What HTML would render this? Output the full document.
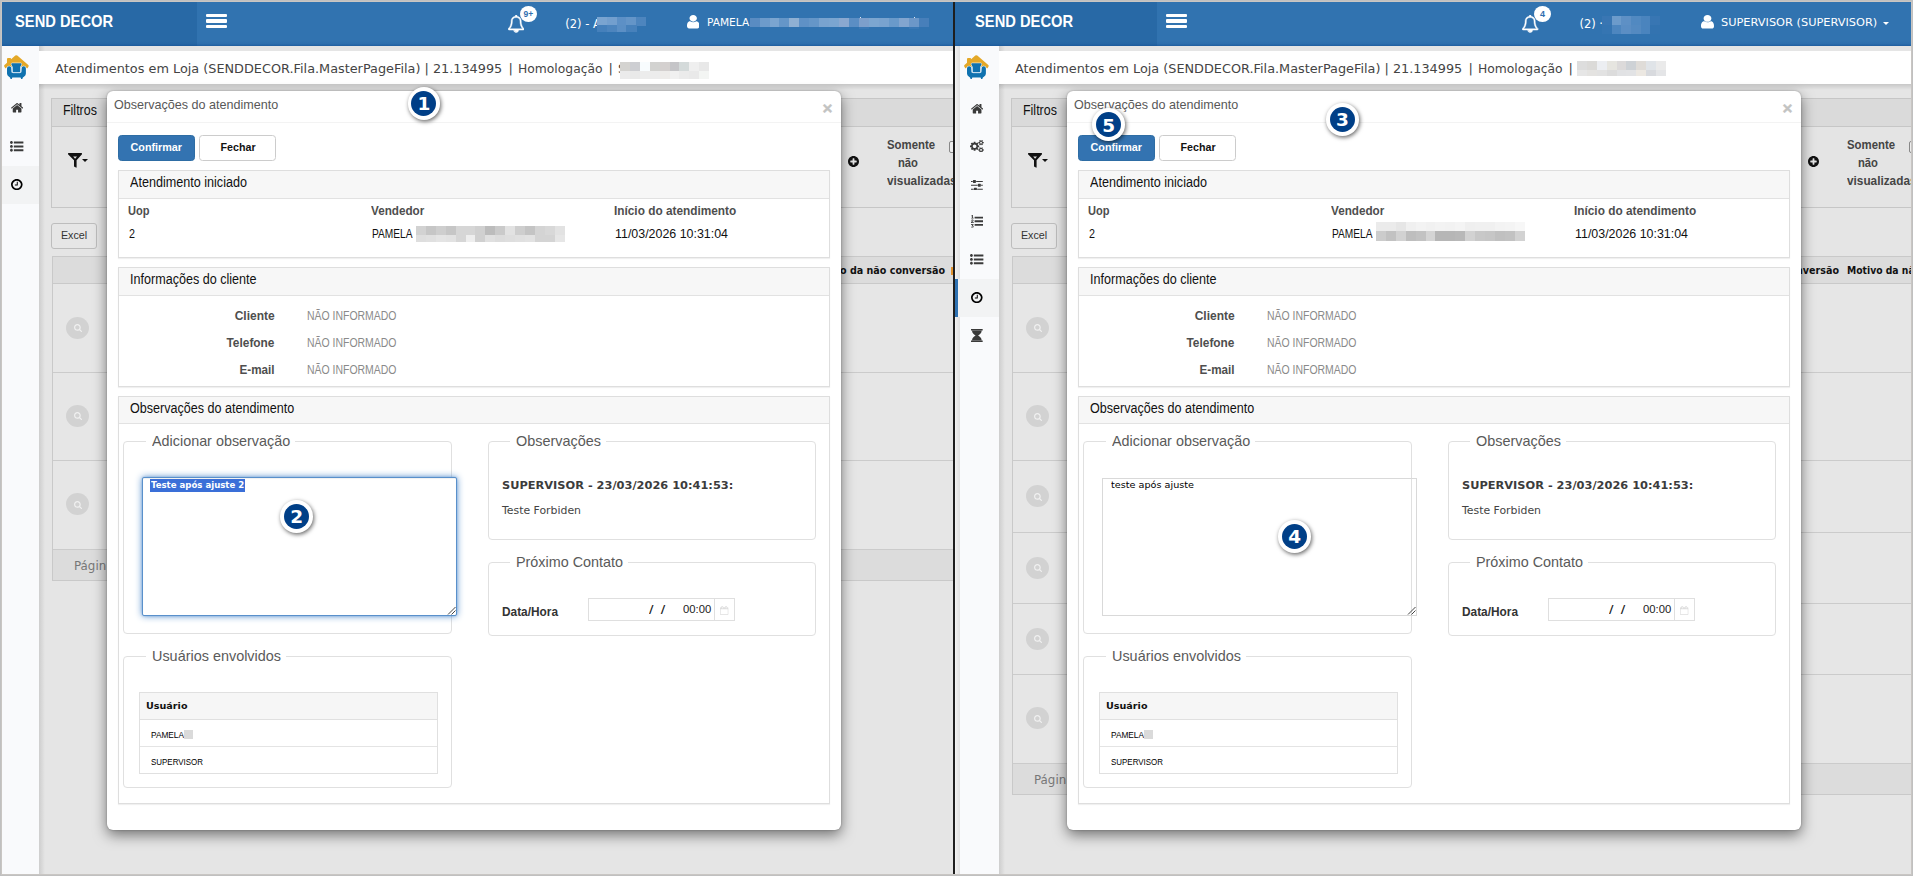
<!DOCTYPE html><html lang="pt-BR"><head><meta charset="utf-8"><title>Observações do atendimento</title><style>

html,body{margin:0;padding:0}
body{width:1913px;height:876px;position:relative;overflow:hidden;background:#e5e5e5;font-family:"Liberation Sans",sans-serif}
.a{position:absolute;display:block}
.t{position:absolute;white-space:nowrap;display:block}
.pane{position:absolute;top:0;height:876px;overflow:hidden}
.org{position:absolute;top:0;height:876px;width:0}
.b{display:inline-block;width:0;height:0}

</style></head><body>
<div class="pane" style="left:0;width:953px"><div class="org" style="left:0"><div class="a" style="left:-10px;top:0px;width:980px;height:876px;background:#e5e5e5"></div><div class="a" style="left:51px;top:98px;width:919px;height:110px;background:#e4e4e4;border:1px solid #c6c6c6;box-sizing:border-box"></div><div class="a" style="left:52px;top:99px;width:918px;height:27px;background:#dadada;border-bottom:1px solid #c6c6c6"></div><span class="t" style="left:62.80px;top:101.90px;font:400 14px/1.2 'Liberation Sans', sans-serif;color:#111;transform:scaleX(0.8892);transform-origin:left center;">Filtros</span><svg class="a" style="left:67.9px;top:153px" width="14" height="14.8" viewBox="0 0 14 14.8"><path fill="#111" d="M0 0.4 Q0 0 0.4 0 L13.6 0 Q14 0 14 0.4 L14 1.3 L8.6 7.3 L8.6 14.3 Q8.6 14.9 8 14.6 L6.3 13.7 Q6 13.5 6 13.1 L6 7.3 L0 1.3 Z"/><path fill="#e0e0e0" d="M5.2 3.4 L9 3.4 L7.1 5.7 Z"/></svg><div class="a" style="left:81.6px;top:158.7px;width:7.400000000000006px;height:3.3000000000000114px;width:0;height:0;border-left:3.5px solid transparent;border-right:3.5px solid transparent;border-top:3.5px solid #111"></div><svg class="a" style="left:848.20px;top:156.00px;" width="11.00" height="11.00" viewBox="0 -1408 1536 1536" preserveAspectRatio="none"><path transform="scale(1,-1)" fill="#111" d="M1216 576C1216 541 1187 512 1152 512H896V256C896 221 867 192 832 192H704C669 192 640 221 640 256V512H384C349 512 320 541 320 576V704C320 739 349 768 384 768H640V1024C640 1059 669 1088 704 1088H832C867 1088 896 1059 896 1024V768H1152C1187 768 1216 739 1216 704V576ZM1536 640C1536 1064 1192 1408 768 1408C344 1408 0 1064 0 640C0 216 344 -128 768 -128C1192 -128 1536 216 1536 640Z"/></svg><span class="t" style="left:886.50px;top:138.30px;font:700 12.5px/1.2 'Liberation Sans', sans-serif;color:#454545;transform:scaleX(0.9091);transform-origin:left center;">Somente</span><span class="t" style="left:897.60px;top:155.90px;font:700 12.5px/1.2 'Liberation Sans', sans-serif;color:#454545;transform:scaleX(0.8995);transform-origin:left center;">não</span><span class="t" style="left:886.50px;top:173.50px;font:700 12.5px/1.2 'Liberation Sans', sans-serif;color:#454545;transform:scaleX(0.9436);transform-origin:left center;">visualizadas</span><div class="a" style="left:949px;top:141px;width:12px;height:12px;border:1px solid #888;border-radius:2px;background:#eee;box-sizing:border-box"></div><div class="a" style="left:51px;top:223.4px;width:45.599999999999994px;height:25.19999999999999px;border:1px solid #bdbdbd;border-radius:3px;background:#e6e6e6;box-sizing:border-box"></div><span class="t" style="left:59.94px;top:229.30px;font:400 11.5px/1.2 'Liberation Sans', sans-serif;color:#333;transform:scaleX(0.9316);transform-origin:center center;">Excel</span><div class="a" style="left:52px;top:256px;width:918px;height:325px;background:#e6e6e6;border:1px solid #c9c9c9;box-sizing:border-box"></div><div class="a" style="left:53px;top:257px;width:917px;height:26px;background:#dcdcdc;border-bottom:1px solid #c9c9c9"></div><div class="a" style="left:53px;top:549.4px;width:917px;height:30.600000000000023px;background:#dcdcdc"></div><div class="a" style="left:53px;top:372px;width:917px;height:1px;background:#cbcbcb"></div><div class="a" style="left:53px;top:460px;width:917px;height:1px;background:#cbcbcb"></div><div class="a" style="left:53px;top:549px;width:917px;height:1px;background:#cbcbcb"></div><div class="a" style="left:65.8px;top:316.5px;width:23px;height:22px;border-radius:50%;background:#d2d2d2"></div><svg class="a" style="left:73.50px;top:323.80px;" width="8.00" height="8.00" viewBox="0 -1408 1664 1664" preserveAspectRatio="none"><path transform="scale(1,-1)" fill="#f0f0f0" d="M1152 704C1152 457 951 256 704 256C457 256 256 457 256 704C256 951 457 1152 704 1152C951 1152 1152 951 1152 704ZM1664 -128C1664 -94 1650 -61 1627 -38L1284 305C1365 422 1408 562 1408 704C1408 1093 1093 1408 704 1408C315 1408 0 1093 0 704C0 315 315 0 704 0C846 0 986 43 1103 124L1446 -218C1469 -242 1502 -256 1536 -256C1606 -256 1664 -198 1664 -128Z"/></svg><div class="a" style="left:65.8px;top:405px;width:23px;height:22px;border-radius:50%;background:#d2d2d2"></div><svg class="a" style="left:73.50px;top:412.30px;" width="8.00" height="8.00" viewBox="0 -1408 1664 1664" preserveAspectRatio="none"><path transform="scale(1,-1)" fill="#f0f0f0" d="M1152 704C1152 457 951 256 704 256C457 256 256 457 256 704C256 951 457 1152 704 1152C951 1152 1152 951 1152 704ZM1664 -128C1664 -94 1650 -61 1627 -38L1284 305C1365 422 1408 562 1408 704C1408 1093 1093 1408 704 1408C315 1408 0 1093 0 704C0 315 315 0 704 0C846 0 986 43 1103 124L1446 -218C1469 -242 1502 -256 1536 -256C1606 -256 1664 -198 1664 -128Z"/></svg><div class="a" style="left:65.8px;top:493.3px;width:23px;height:22px;border-radius:50%;background:#d2d2d2"></div><svg class="a" style="left:73.50px;top:500.60px;" width="8.00" height="8.00" viewBox="0 -1408 1664 1664" preserveAspectRatio="none"><path transform="scale(1,-1)" fill="#f0f0f0" d="M1152 704C1152 457 951 256 704 256C457 256 256 457 256 704C256 951 457 1152 704 1152C951 1152 1152 951 1152 704ZM1664 -128C1664 -94 1650 -61 1627 -38L1284 305C1365 422 1408 562 1408 704C1408 1093 1093 1408 704 1408C315 1408 0 1093 0 704C0 315 315 0 704 0C846 0 986 43 1103 124L1446 -218C1469 -242 1502 -256 1536 -256C1606 -256 1664 -198 1664 -128Z"/></svg><span class="t" style="left:74.00px;top:557.50px;font:400 13px/1.2 'DejaVu Sans', 'Liberation Sans', sans-serif;color:#777;transform:scaleX(0.9115);transform-origin:left center;">Págin</span><span class="t" style="left:840.00px;top:263.90px;font:700 10.5px/1.2 'DejaVu Sans', 'Liberation Sans', sans-serif;color:#111;transform:scaleX(0.9117);transform-origin:left center;">o da não conversão</span><div class="a" style="left:951px;top:267px;width:2.5px;height:7.5px;background:#e0922e"></div><div class="a" style="left:39px;top:46px;width:6px;height:830px;background:linear-gradient(90deg,rgba(0,0,0,.10),rgba(0,0,0,0))"></div><div class="a" style="left:39px;top:84px;width:931px;height:6px;background:linear-gradient(180deg,rgba(0,0,0,.13),rgba(0,0,0,0))"></div><div class="a" style="left:39px;top:51px;width:931px;height:33px;background:#fff"></div><span class="t" style="left:55.40px;top:61.00px;font:400 13px/1.2 'DejaVu Sans', 'Liberation Sans', sans-serif;color:#444;transform:scaleX(0.9870);transform-origin:left center;">Atendimentos em Loja (SENDDECOR.Fila.MasterPageFila) | 21.134995</span><span class="t" style="left:508.60px;top:61.00px;font:400 13px/1.2 'DejaVu Sans', 'Liberation Sans', sans-serif;color:#444;">|</span><span class="t" style="left:518.20px;top:61.00px;font:400 13px/1.2 'DejaVu Sans', 'Liberation Sans', sans-serif;color:#444;transform:scaleX(0.9484);transform-origin:left center;">Homologação</span><span class="t" style="left:608.60px;top:61.00px;font:400 13px/1.2 'DejaVu Sans', 'Liberation Sans', sans-serif;color:#444;">|</span><span class="t" style="left:617.90px;top:61.00px;font:400 13px/1.2 'DejaVu Sans', 'Liberation Sans', sans-serif;color:#444;">S</span><div class="a" style="left:620.2px;top:61.9px;width:88.79999999999995px;height:17.000000000000007px;overflow:hidden"><i class="a" style="left:0.00px;top:0.00px;width:10.37px;height:9.50px;background:#d4d3d0"></i><i class="a" style="left:9.87px;top:0.00px;width:10.37px;height:9.50px;background:#cdced2"></i><i class="a" style="left:19.73px;top:0.00px;width:10.37px;height:9.50px;background:#f8fcfe"></i><i class="a" style="left:29.60px;top:0.00px;width:10.37px;height:9.50px;background:#d2d2d0"></i><i class="a" style="left:39.47px;top:0.00px;width:10.37px;height:9.50px;background:#d4d0cf"></i><i class="a" style="left:49.33px;top:0.00px;width:10.37px;height:9.50px;background:#c5c5c8"></i><i class="a" style="left:59.20px;top:0.00px;width:10.37px;height:9.50px;background:#d4dada"></i><i class="a" style="left:69.07px;top:0.00px;width:10.37px;height:9.50px;background:#efefef"></i><i class="a" style="left:78.93px;top:0.00px;width:10.37px;height:9.50px;background:#e8e8e8"></i><i class="a" style="left:0.00px;top:9.00px;width:10.37px;height:8.50px;background:#ebebeb"></i><i class="a" style="left:9.87px;top:9.00px;width:10.37px;height:8.50px;background:#e9e9e9"></i><i class="a" style="left:19.73px;top:9.00px;width:10.37px;height:8.50px;background:#ececec"></i><i class="a" style="left:29.60px;top:9.00px;width:10.37px;height:8.50px;background:#ececec"></i><i class="a" style="left:39.47px;top:9.00px;width:10.37px;height:8.50px;background:#eeecea"></i><i class="a" style="left:49.33px;top:9.00px;width:10.37px;height:8.50px;background:#f0f0f0"></i><i class="a" style="left:59.20px;top:9.00px;width:10.37px;height:8.50px;background:#ebebeb"></i><i class="a" style="left:69.07px;top:9.00px;width:10.37px;height:8.50px;background:#e9e9e9"></i><i class="a" style="left:78.93px;top:9.00px;width:10.37px;height:8.50px;background:#f3f5f3"></i></div><div class="a" style="left:-5px;top:46px;width:44px;height:830px;background:#f9fafc"></div><div class="a" style="left:-5px;top:46px;width:5px;height:830px;background:linear-gradient(90deg,#f6f6f6,#ececec 30%,#e0e0e0)"></div><div class="a" style="left:-5px;top:166.0px;width:44px;height:37.5px;background:#f2f3f4"></div><div class="a" style="left:-5.5px;top:166.0px;width:3.5px;height:37.5px;background:#2f72b2"></div><svg class="a" style="left:4.1px;top:54.8px" width="24.8" height="24.4" viewBox="0 0 24.8 24.4"><path fill="#e4a828" d="M11.3 0.6 Q12.3 -0.3 13.3 0.6 L24.3 10.1 Q25 10.8 24.5 11.6 L23.7 12.9 Q23.2 13.5 22.6 12.9 L21.4 11.7 L3.4 11.7 L2.2 12.9 Q1.6 13.5 1.1 12.9 L0.3 11.6 Q-0.2 10.8 0.5 10.1 L3 7.8 L3 4 Q3 3 4 3 L6.2 3 Q7.1 3 7.1 3.9 L7.1 4.3 Z"/><path fill="#0f72b0" stroke="#fff" stroke-width="1" paint-order="stroke" d="M7.2 9.1 Q7.2 8.2 8.2 8.2 L16.7 8.2 Q17.7 8.2 17.7 9.1 L16.3 12 L16.1 17 L8.8 17 L8.6 12 Z"/><path fill="#0f72b0" stroke="#fff" stroke-width="1" paint-order="stroke" d="M3 13.4 Q3 11.2 5.1 11.2 Q7.3 11.2 7.3 13.4 L7.6 17.2 Q7.7 18 8.6 18 L16.3 18 Q17.2 18 17.3 17.2 L17.6 13.4 Q17.6 11.2 19.8 11.2 Q21.9 11.2 21.9 13.4 L21.9 18.5 Q21.9 20.6 20.2 21.6 L18.9 22.5 L18.2 24.3 L17.2 24.3 L16.6 22.5 L8.3 22.5 L7.7 24.3 L6.7 24.3 L6 22.5 L4.7 21.6 Q3 20.6 3 18.5 Z"/><path fill="none" stroke="#a9cde6" stroke-width="0.9" d="M7.8 11.6 L8.1 16.7 Q8.2 17.7 9.2 17.7 L15.7 17.7 Q16.7 17.7 16.8 16.7 L17.1 11.6"/></svg><svg class="a" style="left:11.00px;top:103.40px;" width="12.20" height="9.60" viewBox="25.859859505812633 -1283.25 1612.2802809883747 1283.25" preserveAspectRatio="none"><path transform="scale(1,-1)" fill="#3a3a3a" d="M1408 544C1408 546 1408 548 1407 550L832 1024L257 550C257 548 256 546 256 544V64C256 29 285 0 320 0H704V384H960V0H1344C1379 0 1408 29 1408 64ZM1631 613C1642 626 1640 647 1627 658L1408 840V1248C1408 1266 1394 1280 1376 1280H1184C1166 1280 1152 1266 1152 1248V1053L908 1257C866 1292 798 1292 756 1257L37 658C24 647 22 626 33 613L95 539C100 533 108 529 116 528C125 527 133 530 140 535L832 1112L1524 535C1530 530 1537 528 1545 528C1546 528 1547 528 1548 528C1556 529 1564 533 1569 539L1631 613Z"/></svg><svg class="a" style="left:10.40px;top:140.80px;" width="13.40" height="10.80" viewBox="0 -1344 1792 1408" preserveAspectRatio="none"><path transform="scale(1,-1)" fill="#3a3a3a" d="M384 128C384 234 298 320 192 320C86 320 0 234 0 128C0 22 86 -64 192 -64C298 -64 384 22 384 128ZM384 640C384 746 298 832 192 832C86 832 0 746 0 640C0 534 86 448 192 448C298 448 384 534 384 640ZM1792 224C1792 241 1777 256 1760 256H544C527 256 512 241 512 224V32C512 15 527 0 544 0H1760C1777 0 1792 15 1792 32ZM384 1152C384 1258 298 1344 192 1344C86 1344 0 1258 0 1152C0 1046 86 960 192 960C298 960 384 1046 384 1152ZM1792 736C1792 753 1777 768 1760 768H544C527 768 512 753 512 736V544C512 527 527 512 544 512H1760C1777 512 1792 527 1792 544ZM1792 1248C1792 1265 1777 1280 1760 1280H544C527 1280 512 1265 512 1248V1056C512 1039 527 1024 544 1024H1760C1777 1024 1792 1039 1792 1056Z"/></svg><svg class="a" style="left:11.30px;top:178.70px;" width="11.60" height="11.20" viewBox="0 -1408 1536 1536" preserveAspectRatio="none"><path transform="scale(1,-1)" fill="#000" d="M896 992C896 1010 882 1024 864 1024H800C782 1024 768 1010 768 992V640H544C526 640 512 626 512 608V544C512 526 526 512 544 512H864C882 512 896 526 896 544ZM1312 640C1312 340 1068 96 768 96C468 96 224 340 224 640C224 940 468 1184 768 1184C1068 1184 1312 940 1312 640ZM1536 640C1536 1064 1192 1408 768 1408C344 1408 0 1064 0 640C0 216 344 -128 768 -128C1192 -128 1536 216 1536 640Z"/></svg><div class="a" style="left:-10px;top:0px;width:207px;height:46px;background:#2869a6"></div><div class="a" style="left:197px;top:0px;width:773px;height:46px;background:#3173b0"></div><div class="a" style="left:-10px;top:41px;width:980px;height:5px;background:linear-gradient(180deg,rgba(20,80,150,0),rgba(20,80,150,.12) 55%,rgba(20,80,150,.6))"></div><span class="t" style="left:15.40px;top:12.00px;font:700 16.5px/1.2 'Liberation Sans', sans-serif;color:#fff;transform:scaleX(0.8917);transform-origin:left center;">SEND DECOR</span><div class="a" style="left:205.6px;top:14.2px;width:21.80000000000001px;height:3.1999999999999993px;background:#fff;border-radius:1px"></div><div class="a" style="left:205.6px;top:19.4px;width:21.80000000000001px;height:3.1999999999999993px;background:#fff;border-radius:1px"></div><div class="a" style="left:205.6px;top:24.6px;width:21.80000000000001px;height:3.1999999999999957px;background:#fff;border-radius:1px"></div><svg class="a" style="left:508.03px;top:15.20px;" width="16.34" height="17.60" viewBox="64 -1536 1664 1792" preserveAspectRatio="none"><path transform="scale(1,-1)" fill="#fff" stroke="#fff" stroke-width="45" d="M912 -160C912 -169 905 -176 896 -176C799 -176 720 -97 720 0C720 9 727 16 736 16C745 16 752 9 752 0C752 -79 817 -144 896 -144C905 -144 912 -151 912 -160ZM246 128C425 330 512 604 512 960C512 1089 634 1280 896 1280C1158 1280 1280 1089 1280 960C1280 604 1367 330 1546 128ZM1728 128C1580 253 1408 477 1408 960C1408 1152 1249 1362 984 1401C989 1413 992 1426 992 1440C992 1493 949 1536 896 1536C843 1536 800 1493 800 1440C800 1426 803 1413 808 1401C543 1362 384 1152 384 960C384 477 212 253 64 128C64 58 122 0 192 0H640C640 -141 755 -256 896 -256C1037 -256 1152 -141 1152 0H1600C1670 0 1728 58 1728 128Z"/></svg><div class="a" style="left:520px;top:5.9px;width:16.9px;height:16px;border-radius:50%;background:#fff"></div><span class="t" style="left:523.55px;top:8.60px;font:700 8.5px/1.2 'Liberation Sans', sans-serif;color:#2f6fb0;">9+</span><span class="t" style="left:565.30px;top:17.60px;font:400 11.5px/1.2 'DejaVu Sans', 'Liberation Sans', sans-serif;color:#fff;">(2) - A</span><div class="a" style="left:596.9px;top:17px;width:49.10000000000002px;height:14.899999999999999px;overflow:hidden"><i class="a" style="left:0.00px;top:0.00px;width:10.32px;height:8.70px;background:#7aa4d0"></i><i class="a" style="left:9.82px;top:0.00px;width:10.32px;height:8.70px;background:#739fce"></i><i class="a" style="left:19.64px;top:0.00px;width:10.32px;height:8.70px;background:#5d90c6"></i><i class="a" style="left:29.46px;top:0.00px;width:10.32px;height:8.70px;background:#6495c8"></i><i class="a" style="left:39.28px;top:0.00px;width:10.32px;height:8.70px;background:#4d85be"></i><i class="a" style="left:0.00px;top:8.20px;width:10.32px;height:7.20px;background:#4580bb"></i><i class="a" style="left:9.82px;top:8.20px;width:10.32px;height:7.20px;background:#4d85be"></i><i class="a" style="left:19.64px;top:8.20px;width:10.32px;height:7.20px;background:#5b8fc5"></i><i class="a" style="left:29.46px;top:8.20px;width:10.32px;height:7.20px;background:#4781bb"></i></div><svg class="a" style="left:686.80px;top:15.20px;" width="12.40" height="13.40" viewBox="0 -1408 1280 1536" preserveAspectRatio="none"><path transform="scale(1,-1)" fill="#fff" d="M1280 137C1280 400 1215 704 953 704C872 625 762 576 640 576C518 576 408 625 327 704C65 704 0 400 0 137C0 -9 96 -128 213 -128H1067C1184 -128 1280 -9 1280 137ZM1024 1024C1024 1236 852 1408 640 1408C428 1408 256 1236 256 1024C256 812 428 640 640 640C852 640 1024 812 1024 1024Z"/></svg><span class="t" style="left:706.80px;top:15.80px;font:400 10.5px/1.2 'DejaVu Sans', 'Liberation Sans', sans-serif;color:#fff;transform:scaleX(1.0093);transform-origin:left center;">PAMELA</span><div class="a" style="left:749.6px;top:18px;width:179.39999999999998px;height:9px;overflow:hidden"><i class="a" style="left:0.00px;top:0.00px;width:10.47px;height:9.50px;background:#5a8cc2"></i><i class="a" style="left:9.97px;top:0.00px;width:10.47px;height:9.50px;background:#6d9bcb"></i><i class="a" style="left:19.93px;top:0.00px;width:10.47px;height:9.50px;background:#7ba5d0"></i><i class="a" style="left:29.90px;top:0.00px;width:10.47px;height:9.50px;background:#6596c8"></i><i class="a" style="left:39.87px;top:0.00px;width:10.47px;height:9.50px;background:#8fb0d3"></i><i class="a" style="left:49.83px;top:0.00px;width:10.47px;height:9.50px;background:#5f91c6"></i><i class="a" style="left:59.80px;top:0.00px;width:10.47px;height:9.50px;background:#6596c8"></i><i class="a" style="left:69.77px;top:0.00px;width:10.47px;height:9.50px;background:#79a3cf"></i><i class="a" style="left:79.73px;top:0.00px;width:10.47px;height:9.50px;background:#7ba5d0"></i><i class="a" style="left:89.70px;top:0.00px;width:10.47px;height:9.50px;background:#8aa8d0"></i><i class="a" style="left:99.67px;top:0.00px;width:10.47px;height:9.50px;background:#5b8ec4"></i><i class="a" style="left:109.63px;top:0.00px;width:10.47px;height:9.50px;background:#7d9fcb"></i><i class="a" style="left:119.60px;top:0.00px;width:10.47px;height:9.50px;background:#7ca6d0"></i><i class="a" style="left:129.57px;top:0.00px;width:10.47px;height:9.50px;background:#79a3cf"></i><i class="a" style="left:139.53px;top:0.00px;width:10.47px;height:9.50px;background:#6a9aca"></i><i class="a" style="left:149.50px;top:0.00px;width:10.47px;height:9.50px;background:#82a5cf"></i><i class="a" style="left:159.47px;top:0.00px;width:10.47px;height:9.50px;background:#6c97c8"></i><i class="a" style="left:169.43px;top:0.00px;width:10.47px;height:9.50px;background:#477fba"></i></div><div class="a" style="left:859px;top:27px;width:10px;height:2px;background:#3a78b5"></div><div class="a" style="left:909px;top:27px;width:10px;height:2px;background:#3a78b5"></div><div class="a" style="left:859.5px;top:16.6px;width:1.5px;height:1.3999999999999986px;background:#dfe8f3"></div><div class="a" style="left:913.5px;top:16.6px;width:1.5px;height:1.3999999999999986px;background:#dfe8f3"></div><div class="a" style="left:107px;top:90.6px;width:734.4px;height:739.0px;background:#fff;border-radius:6px;box-shadow:0 5px 14px rgba(0,0,0,.5), 0 0 2px rgba(0,0,0,.3)"></div><div class="a" style="left:107px;top:121.5px;width:734px;height:1.0px;background:#f3f3f3"></div><span class="t" style="left:113.80px;top:96.60px;font:400 13px/1.2 'Liberation Sans', sans-serif;color:#585858;transform:scaleX(0.9669);transform-origin:left center;">Observações do atendimento</span><span class="t" style="left:822.53px;top:99.30px;font:700 17px/1.2 'Liberation Sans', sans-serif;color:#c2c2c2;-webkit-text-stroke:.5px #c6c6c6;">×</span><div class="a" style="left:118.2px;top:135.2px;width:76.99999999999999px;height:25.80000000000001px;background:#3373b1;border-radius:3.5px;border:1px solid #2e6da4;box-sizing:border-box"></div><span class="t" style="left:130.32px;top:140.90px;font:700 11px/1.2 'Liberation Sans', sans-serif;color:#fff;transform:scaleX(0.9798);transform-origin:center center;">Confirmar</span><div class="a" style="left:199.4px;top:135.2px;width:76.6px;height:25.80000000000001px;background:#fff;border-radius:3.5px;border:1px solid #ccc;box-sizing:border-box"></div><span class="t" style="left:219.96px;top:140.90px;font:700 11px/1.2 'Liberation Sans', sans-serif;color:#111;transform:scaleX(0.9701);transform-origin:center center;">Fechar</span><div class="a" style="left:118px;top:170px;width:712px;height:87.60000000000002px;border:1px solid #dedede;box-sizing:border-box;background:#fff;box-shadow:0 1px 1px rgba(0,0,0,.06)"></div><div class="a" style="left:119px;top:171px;width:710px;height:27.80000000000001px;background:#f7f7f7;border-bottom:1px solid #e2e2e2;box-sizing:border-box"></div><span class="t" style="left:129.80px;top:174.20px;font:400 14px/1.2 'Liberation Sans', sans-serif;color:#111;transform:scaleX(0.9001);transform-origin:left center;">Atendimento iniciado</span><div class="a" style="left:118px;top:267.3px;width:712px;height:119.89999999999998px;border:1px solid #dedede;box-sizing:border-box;background:#fff;box-shadow:0 1px 1px rgba(0,0,0,.06)"></div><div class="a" style="left:119px;top:268.3px;width:710px;height:27.5px;background:#f7f7f7;border-bottom:1px solid #e2e2e2;box-sizing:border-box"></div><span class="t" style="left:129.80px;top:271.20px;font:400 14px/1.2 'Liberation Sans', sans-serif;color:#111;transform:scaleX(0.8981);transform-origin:left center;">Informações do cliente</span><div class="a" style="left:118px;top:396px;width:712px;height:407.70000000000005px;border:1px solid #dedede;box-sizing:border-box;background:#fff;box-shadow:0 1px 1px rgba(0,0,0,.06)"></div><div class="a" style="left:119px;top:397px;width:710px;height:27.399999999999977px;background:#f7f7f7;border-bottom:1px solid #e2e2e2;box-sizing:border-box"></div><span class="t" style="left:129.80px;top:399.80px;font:400 14px/1.2 'Liberation Sans', sans-serif;color:#111;transform:scaleX(0.8984);transform-origin:left center;">Observações do atendimento</span><span class="t" style="left:128.30px;top:204.30px;font:700 12px/1.2 'Liberation Sans', sans-serif;color:#4e4e4e;transform:scaleX(0.9216);transform-origin:left center;">Uop</span><span class="t" style="left:371.20px;top:204.30px;font:700 12px/1.2 'Liberation Sans', sans-serif;color:#4e4e4e;transform:scaleX(0.9746);transform-origin:left center;">Vendedor</span><span class="t" style="left:614.20px;top:204.30px;font:700 12px/1.2 'Liberation Sans', sans-serif;color:#4e4e4e;transform:scaleX(0.9854);transform-origin:left center;">Início do atendimento</span><span class="t" style="left:129.00px;top:227.10px;font:400 12.5px/1.2 'Liberation Sans', sans-serif;color:#111;transform:scaleX(0.8629);transform-origin:left center;">2</span><span class="t" style="left:371.90px;top:227.10px;font:400 12.5px/1.2 'Liberation Sans', sans-serif;color:#111;transform:scaleX(0.8133);transform-origin:left center;">PAMELA</span><span class="t" style="left:614.70px;top:227.10px;font:400 12.5px/1.2 'Liberation Sans', sans-serif;color:#111;transform:scaleX(0.9933);transform-origin:left center;">11/03/2026 10:31:04</span><div class="a" style="left:415.8px;top:225.9px;width:149.2px;height:15.900000000000006px;overflow:hidden"><i class="a" style="left:0.00px;top:0.00px;width:10.45px;height:9.60px;background:#d2d2d2"></i><i class="a" style="left:9.95px;top:0.00px;width:10.45px;height:9.60px;background:#c6c6c6"></i><i class="a" style="left:19.89px;top:0.00px;width:10.45px;height:9.60px;background:#cecece"></i><i class="a" style="left:29.84px;top:0.00px;width:10.45px;height:9.60px;background:#c6c6c6"></i><i class="a" style="left:39.79px;top:0.00px;width:10.45px;height:9.60px;background:#d6d6d6"></i><i class="a" style="left:49.73px;top:0.00px;width:10.45px;height:9.60px;background:#d6d6d6"></i><i class="a" style="left:59.68px;top:0.00px;width:10.45px;height:9.60px;background:#d0d0d0"></i><i class="a" style="left:69.63px;top:0.00px;width:10.45px;height:9.60px;background:#bcbcbc"></i><i class="a" style="left:79.57px;top:0.00px;width:10.45px;height:9.60px;background:#cacaca"></i><i class="a" style="left:89.52px;top:0.00px;width:10.45px;height:9.60px;background:#e2e2e2"></i><i class="a" style="left:99.47px;top:0.00px;width:10.45px;height:9.60px;background:#cecece"></i><i class="a" style="left:109.41px;top:0.00px;width:10.45px;height:9.60px;background:#c4c4c4"></i><i class="a" style="left:119.36px;top:0.00px;width:10.45px;height:9.60px;background:#d4d4d4"></i><i class="a" style="left:129.31px;top:0.00px;width:10.45px;height:9.60px;background:#d8d8d8"></i><i class="a" style="left:139.25px;top:0.00px;width:10.45px;height:9.60px;background:#e2e2e2"></i><i class="a" style="left:0.00px;top:9.10px;width:10.45px;height:7.30px;background:#dedede"></i><i class="a" style="left:9.95px;top:9.10px;width:10.45px;height:7.30px;background:#e0e0e0"></i><i class="a" style="left:19.89px;top:9.10px;width:10.45px;height:7.30px;background:#e4e4e4"></i><i class="a" style="left:29.84px;top:9.10px;width:10.45px;height:7.30px;background:#e2e2e2"></i><i class="a" style="left:39.79px;top:9.10px;width:10.45px;height:7.30px;background:#d6d6d6"></i><i class="a" style="left:49.73px;top:9.10px;width:10.45px;height:7.30px;background:#eeeeee"></i><i class="a" style="left:59.68px;top:9.10px;width:10.45px;height:7.30px;background:#d0d0d0"></i><i class="a" style="left:69.63px;top:9.10px;width:10.45px;height:7.30px;background:#e0e0e0"></i><i class="a" style="left:79.57px;top:9.10px;width:10.45px;height:7.30px;background:#dcdcdc"></i><i class="a" style="left:89.52px;top:9.10px;width:10.45px;height:7.30px;background:#dedede"></i><i class="a" style="left:99.47px;top:9.10px;width:10.45px;height:7.30px;background:#e0e0e0"></i><i class="a" style="left:109.41px;top:9.10px;width:10.45px;height:7.30px;background:#e2e2e2"></i><i class="a" style="left:119.36px;top:9.10px;width:10.45px;height:7.30px;background:#d4d4d4"></i><i class="a" style="left:129.31px;top:9.10px;width:10.45px;height:7.30px;background:#d4d4d4"></i><i class="a" style="left:139.25px;top:9.10px;width:10.45px;height:7.30px;background:#e6e6e6"></i></div><span class="t" style="left:232.51px;top:309.30px;font:700 12.5px/1.2 'Liberation Sans', sans-serif;color:#4e4e4e;transform:scaleX(0.9595);transform-origin:right center;">Cliente</span><span class="t" style="left:306.80px;top:309.30px;font:400 12px/1.2 'Liberation Sans', sans-serif;color:#8a8a8a;transform:scaleX(0.8717);transform-origin:left center;">NÃO INFORMADO</span><span class="t" style="left:223.72px;top:336.30px;font:700 12.5px/1.2 'Liberation Sans', sans-serif;color:#4e4e4e;transform:scaleX(0.9508);transform-origin:right center;">Telefone</span><span class="t" style="left:306.80px;top:336.30px;font:400 12px/1.2 'Liberation Sans', sans-serif;color:#8a8a8a;transform:scaleX(0.8717);transform-origin:left center;">NÃO INFORMADO</span><span class="t" style="left:236.68px;top:363.30px;font:700 12.5px/1.2 'Liberation Sans', sans-serif;color:#4e4e4e;transform:scaleX(0.9329);transform-origin:right center;">E-mail</span><span class="t" style="left:306.80px;top:363.30px;font:400 12px/1.2 'Liberation Sans', sans-serif;color:#8a8a8a;transform:scaleX(0.8717);transform-origin:left center;">NÃO INFORMADO</span><div class="a" style="left:123.4px;top:441px;width:328.6px;height:193px;border:1px solid #e0e0e0;border-radius:4px;box-sizing:border-box"></div><div class="a" style="left:145.5px;top:439px;width:149.2px;height:5px;background:#fff"></div><span class="t" style="left:151.50px;top:431.60px;font:400 15px/1.2 'Liberation Sans', sans-serif;color:#5a5a5a;transform:scaleX(0.9580);transform-origin:left center;">Adicionar observação</span><div class="a" style="left:488.3px;top:441px;width:327.99999999999994px;height:99px;border:1px solid #e0e0e0;border-radius:4px;box-sizing:border-box"></div><div class="a" style="left:509.70000000000005px;top:439px;width:96.0px;height:5px;background:#fff"></div><span class="t" style="left:515.70px;top:431.60px;font:400 15px/1.2 'Liberation Sans', sans-serif;color:#5a5a5a;transform:scaleX(0.9618);transform-origin:left center;">Observações</span><div class="a" style="left:488.3px;top:562px;width:327.99999999999994px;height:73.79999999999995px;border:1px solid #e0e0e0;border-radius:4px;box-sizing:border-box"></div><div class="a" style="left:509.70000000000005px;top:560px;width:118.0px;height:5px;background:#fff"></div><span class="t" style="left:515.70px;top:552.80px;font:400 15px/1.2 'Liberation Sans', sans-serif;color:#5a5a5a;transform:scaleX(0.9578);transform-origin:left center;">Próximo Contato</span><div class="a" style="left:123.4px;top:656px;width:328.6px;height:132px;border:1px solid #e0e0e0;border-radius:4px;box-sizing:border-box"></div><div class="a" style="left:145.5px;top:654px;width:140.0px;height:5px;background:#fff"></div><span class="t" style="left:151.50px;top:646.60px;font:400 15px/1.2 'Liberation Sans', sans-serif;color:#5a5a5a;transform:scaleX(0.9610);transform-origin:left center;">Usuários envolvidos</span><div class="a" style="left:142.2px;top:477.4px;width:314.8px;height:138.80000000000007px;background:#fff;border:1.6px solid #5990cb;border-radius:2px;box-sizing:border-box;box-shadow:0 0 7px rgba(80,140,205,.95), 0 0 2px rgba(80,140,205,.5), inset 0 1px 1px rgba(0,0,0,.06)"></div><div class="a" style="left:150px;top:478.8px;width:94.6px;height:13.199999999999989px;background:#3a6fd8"></div><span class="t" style="left:150.60px;top:478.70px;font:700 9.5px/1.2 'DejaVu Sans', 'Liberation Sans', sans-serif;color:#fff;transform:scaleX(0.9023);transform-origin:left center;">Teste após ajuste 2</span><svg class="a" style="left:447px;top:606px" width="9" height="9" viewBox="0 0 9 9"><path d="M1 8.5L8.5 1M4.5 8.5L8.5 4.5" stroke="#444" stroke-width="1" fill="none"/></svg><span class="t" style="left:502.00px;top:479.30px;font:700 11px/1.2 'DejaVu Sans', 'Liberation Sans', sans-serif;color:#3c3c3c;transform:scaleX(1.0340);transform-origin:left center;">SUPERVISOR - 23/03/2026 10:41:53:</span><span class="t" style="left:502.00px;top:504.00px;font:400 11px/1.2 'DejaVu Sans', 'Liberation Sans', sans-serif;color:#444;transform:scaleX(0.9890);transform-origin:left center;">Teste Forbiden</span><span class="t" style="left:502.00px;top:605.00px;font:700 12px/1.2 'Liberation Sans', sans-serif;color:#333;transform:scaleX(0.9879);transform-origin:left center;">Data/Hora</span><div class="a" style="left:588px;top:598.4px;width:146.79999999999995px;height:22.800000000000068px;border:1px solid #dfdfdf;box-sizing:border-box;background:#fff"></div><div class="a" style="left:714px;top:598.4px;width:1px;height:22.800000000000068px;background:#dfdfdf"></div><span class="t" style="left:649.40px;top:602.60px;font:400 12px/1.2 'Liberation Sans', sans-serif;color:#222;transform:scaleX(1.3482);transform-origin:left center;word-spacing:2px;">/ /</span><span class="t" style="left:682.70px;top:604.10px;font:400 10px/1.2 'Liberation Sans', sans-serif;color:#222;transform:scaleX(1.1266);transform-origin:left center;">00:00</span><svg class="a" style="left:720.42px;top:605.70px;" width="8.36" height="9.00" viewBox="0 -1536 1664 1792" preserveAspectRatio="none"><path transform="scale(1,-1)" fill="#dedede" d="M128 -128V896H1536V-128ZM512 1088C512 1070 498 1056 480 1056H416C398 1056 384 1070 384 1088V1376C384 1394 398 1408 416 1408H480C498 1408 512 1394 512 1376V1088ZM1280 1088C1280 1070 1266 1056 1248 1056H1184C1166 1056 1152 1070 1152 1088V1376C1152 1394 1166 1408 1184 1408H1248C1266 1408 1280 1394 1280 1376V1088ZM1664 1152C1664 1222 1606 1280 1536 1280H1408V1376C1408 1464 1336 1536 1248 1536H1184C1096 1536 1024 1464 1024 1376V1280H640V1376C640 1464 568 1536 480 1536H416C328 1536 256 1464 256 1376V1280H128C58 1280 0 1222 0 1152V-128C0 -198 58 -256 128 -256H1536C1606 -256 1664 -198 1664 -128Z"/></svg><div class="a" style="left:139.2px;top:692.2px;width:299.0px;height:81.79999999999995px;border:1px solid #e0e0e0;box-sizing:border-box"></div><div class="a" style="left:140.2px;top:693.2px;width:297.0px;height:26.799999999999955px;background:#f6f6f6;border-bottom:1.5px solid #e0e0e0;box-sizing:border-box"></div><div class="a" style="left:140.2px;top:746.4px;width:297.0px;height:1.0px;background:#e4e4e4"></div><span class="t" style="left:146.00px;top:700.20px;font:700 9.3px/1.2 'DejaVu Sans', 'Liberation Sans', sans-serif;color:#111;transform:scaleX(1.0339);transform-origin:left center;">Usuário</span><span class="t" style="left:151.00px;top:729.00px;font:400 9.8px/1.2 'Liberation Sans', sans-serif;color:#000;transform:scaleX(0.8455);transform-origin:left center;">PAMELA</span><div class="a" style="left:184.3px;top:729.8px;width:8.699999999999989px;height:8.800000000000068px;background:#dadada"></div><span class="t" style="left:151.00px;top:756.00px;font:400 9.8px/1.2 'Liberation Sans', sans-serif;color:#000;transform:scaleX(0.8117);transform-origin:left center;">SUPERVISOR</span><div class="a" style="left:407.6px;top:87.0px;width:32.6px;height:32.6px;border-radius:50%;background:#fff;box-shadow:1px 1.5px 4px rgba(0,0,0,.6)"></div><div class="a" style="left:411.3px;top:90.7px;width:25.2px;height:25.2px;border-radius:50%;background:#003f87"></div><span class="t" style="left:417.51px;top:93.15px;font:700 18.5px/1.2 'DejaVu Sans', 'Liberation Sans', sans-serif;color:#fff;">1</span><div class="a" style="left:280.4px;top:500.1px;width:32.6px;height:32.6px;border-radius:50%;background:#fff;box-shadow:1px 1.5px 4px rgba(0,0,0,.6)"></div><div class="a" style="left:284.1px;top:503.8px;width:25.2px;height:25.2px;border-radius:50%;background:#003f87"></div><span class="t" style="left:290.31px;top:506.25px;font:700 18.5px/1.2 'DejaVu Sans', 'Liberation Sans', sans-serif;color:#fff;">2</span></div></div>
<div class="pane" style="left:955px;width:958px"><div class="org" style="left:5px"><div class="a" style="left:-10px;top:0px;width:980px;height:876px;background:#e5e5e5"></div><div class="a" style="left:51px;top:98px;width:919px;height:110px;background:#e4e4e4;border:1px solid #c6c6c6;box-sizing:border-box"></div><div class="a" style="left:52px;top:99px;width:918px;height:27px;background:#dadada;border-bottom:1px solid #c6c6c6"></div><span class="t" style="left:62.80px;top:101.90px;font:400 14px/1.2 'Liberation Sans', sans-serif;color:#111;transform:scaleX(0.8892);transform-origin:left center;">Filtros</span><svg class="a" style="left:67.9px;top:153px" width="14" height="14.8" viewBox="0 0 14 14.8"><path fill="#111" d="M0 0.4 Q0 0 0.4 0 L13.6 0 Q14 0 14 0.4 L14 1.3 L8.6 7.3 L8.6 14.3 Q8.6 14.9 8 14.6 L6.3 13.7 Q6 13.5 6 13.1 L6 7.3 L0 1.3 Z"/><path fill="#e0e0e0" d="M5.2 3.4 L9 3.4 L7.1 5.7 Z"/></svg><div class="a" style="left:81.6px;top:158.7px;width:7.400000000000006px;height:3.3000000000000114px;width:0;height:0;border-left:3.5px solid transparent;border-right:3.5px solid transparent;border-top:3.5px solid #111"></div><svg class="a" style="left:848.20px;top:156.00px;" width="11.00" height="11.00" viewBox="0 -1408 1536 1536" preserveAspectRatio="none"><path transform="scale(1,-1)" fill="#111" d="M1216 576C1216 541 1187 512 1152 512H896V256C896 221 867 192 832 192H704C669 192 640 221 640 256V512H384C349 512 320 541 320 576V704C320 739 349 768 384 768H640V1024C640 1059 669 1088 704 1088H832C867 1088 896 1059 896 1024V768H1152C1187 768 1216 739 1216 704V576ZM1536 640C1536 1064 1192 1408 768 1408C344 1408 0 1064 0 640C0 216 344 -128 768 -128C1192 -128 1536 216 1536 640Z"/></svg><span class="t" style="left:886.50px;top:138.30px;font:700 12.5px/1.2 'Liberation Sans', sans-serif;color:#454545;transform:scaleX(0.9091);transform-origin:left center;">Somente</span><span class="t" style="left:897.60px;top:155.90px;font:700 12.5px/1.2 'Liberation Sans', sans-serif;color:#454545;transform:scaleX(0.8995);transform-origin:left center;">não</span><span class="t" style="left:886.50px;top:173.50px;font:700 12.5px/1.2 'Liberation Sans', sans-serif;color:#454545;transform:scaleX(0.9436);transform-origin:left center;">visualizadas</span><div class="a" style="left:949px;top:141px;width:12px;height:12px;border:1px solid #888;border-radius:2px;background:#eee;box-sizing:border-box"></div><div class="a" style="left:51px;top:223.4px;width:45.599999999999994px;height:25.19999999999999px;border:1px solid #bdbdbd;border-radius:3px;background:#e6e6e6;box-sizing:border-box"></div><span class="t" style="left:59.94px;top:229.30px;font:400 11.5px/1.2 'Liberation Sans', sans-serif;color:#333;transform:scaleX(0.9316);transform-origin:center center;">Excel</span><div class="a" style="left:52px;top:256px;width:918px;height:539px;background:#e6e6e6;border:1px solid #c9c9c9;box-sizing:border-box"></div><div class="a" style="left:53px;top:257px;width:917px;height:26px;background:#dcdcdc;border-bottom:1px solid #c9c9c9"></div><div class="a" style="left:53px;top:763.7px;width:917px;height:30.299999999999955px;background:#dcdcdc"></div><div class="a" style="left:53px;top:372px;width:917px;height:1px;background:#cbcbcb"></div><div class="a" style="left:53px;top:460px;width:917px;height:1px;background:#cbcbcb"></div><div class="a" style="left:53px;top:532px;width:917px;height:1px;background:#cbcbcb"></div><div class="a" style="left:53px;top:603px;width:917px;height:1px;background:#cbcbcb"></div><div class="a" style="left:53px;top:674px;width:917px;height:1px;background:#cbcbcb"></div><div class="a" style="left:53px;top:763px;width:917px;height:1px;background:#cbcbcb"></div><div class="a" style="left:65.8px;top:316.7px;width:23px;height:22px;border-radius:50%;background:#d2d2d2"></div><svg class="a" style="left:73.50px;top:324.00px;" width="8.00" height="8.00" viewBox="0 -1408 1664 1664" preserveAspectRatio="none"><path transform="scale(1,-1)" fill="#f0f0f0" d="M1152 704C1152 457 951 256 704 256C457 256 256 457 256 704C256 951 457 1152 704 1152C951 1152 1152 951 1152 704ZM1664 -128C1664 -94 1650 -61 1627 -38L1284 305C1365 422 1408 562 1408 704C1408 1093 1093 1408 704 1408C315 1408 0 1093 0 704C0 315 315 0 704 0C846 0 986 43 1103 124L1446 -218C1469 -242 1502 -256 1536 -256C1606 -256 1664 -198 1664 -128Z"/></svg><div class="a" style="left:65.8px;top:405.4px;width:23px;height:22px;border-radius:50%;background:#d2d2d2"></div><svg class="a" style="left:73.50px;top:412.70px;" width="8.00" height="8.00" viewBox="0 -1408 1664 1664" preserveAspectRatio="none"><path transform="scale(1,-1)" fill="#f0f0f0" d="M1152 704C1152 457 951 256 704 256C457 256 256 457 256 704C256 951 457 1152 704 1152C951 1152 1152 951 1152 704ZM1664 -128C1664 -94 1650 -61 1627 -38L1284 305C1365 422 1408 562 1408 704C1408 1093 1093 1408 704 1408C315 1408 0 1093 0 704C0 315 315 0 704 0C846 0 986 43 1103 124L1446 -218C1469 -242 1502 -256 1536 -256C1606 -256 1664 -198 1664 -128Z"/></svg><div class="a" style="left:65.8px;top:485.4px;width:23px;height:22px;border-radius:50%;background:#d2d2d2"></div><svg class="a" style="left:73.50px;top:492.70px;" width="8.00" height="8.00" viewBox="0 -1408 1664 1664" preserveAspectRatio="none"><path transform="scale(1,-1)" fill="#f0f0f0" d="M1152 704C1152 457 951 256 704 256C457 256 256 457 256 704C256 951 457 1152 704 1152C951 1152 1152 951 1152 704ZM1664 -128C1664 -94 1650 -61 1627 -38L1284 305C1365 422 1408 562 1408 704C1408 1093 1093 1408 704 1408C315 1408 0 1093 0 704C0 315 315 0 704 0C846 0 986 43 1103 124L1446 -218C1469 -242 1502 -256 1536 -256C1606 -256 1664 -198 1664 -128Z"/></svg><div class="a" style="left:65.8px;top:556.5px;width:23px;height:22px;border-radius:50%;background:#d2d2d2"></div><svg class="a" style="left:73.50px;top:563.80px;" width="8.00" height="8.00" viewBox="0 -1408 1664 1664" preserveAspectRatio="none"><path transform="scale(1,-1)" fill="#f0f0f0" d="M1152 704C1152 457 951 256 704 256C457 256 256 457 256 704C256 951 457 1152 704 1152C951 1152 1152 951 1152 704ZM1664 -128C1664 -94 1650 -61 1627 -38L1284 305C1365 422 1408 562 1408 704C1408 1093 1093 1408 704 1408C315 1408 0 1093 0 704C0 315 315 0 704 0C846 0 986 43 1103 124L1446 -218C1469 -242 1502 -256 1536 -256C1606 -256 1664 -198 1664 -128Z"/></svg><div class="a" style="left:65.8px;top:627.7px;width:23px;height:22px;border-radius:50%;background:#d2d2d2"></div><svg class="a" style="left:73.50px;top:635.00px;" width="8.00" height="8.00" viewBox="0 -1408 1664 1664" preserveAspectRatio="none"><path transform="scale(1,-1)" fill="#f0f0f0" d="M1152 704C1152 457 951 256 704 256C457 256 256 457 256 704C256 951 457 1152 704 1152C951 1152 1152 951 1152 704ZM1664 -128C1664 -94 1650 -61 1627 -38L1284 305C1365 422 1408 562 1408 704C1408 1093 1093 1408 704 1408C315 1408 0 1093 0 704C0 315 315 0 704 0C846 0 986 43 1103 124L1446 -218C1469 -242 1502 -256 1536 -256C1606 -256 1664 -198 1664 -128Z"/></svg><div class="a" style="left:65.8px;top:707.4px;width:23px;height:22px;border-radius:50%;background:#d2d2d2"></div><svg class="a" style="left:73.50px;top:714.70px;" width="8.00" height="8.00" viewBox="0 -1408 1664 1664" preserveAspectRatio="none"><path transform="scale(1,-1)" fill="#f0f0f0" d="M1152 704C1152 457 951 256 704 256C457 256 256 457 256 704C256 951 457 1152 704 1152C951 1152 1152 951 1152 704ZM1664 -128C1664 -94 1650 -61 1627 -38L1284 305C1365 422 1408 562 1408 704C1408 1093 1093 1408 704 1408C315 1408 0 1093 0 704C0 315 315 0 704 0C846 0 986 43 1103 124L1446 -218C1469 -242 1502 -256 1536 -256C1606 -256 1664 -198 1664 -128Z"/></svg><span class="t" style="left:74.00px;top:771.50px;font:400 13px/1.2 'DejaVu Sans', 'Liberation Sans', sans-serif;color:#777;transform:scaleX(0.9115);transform-origin:left center;">Págin</span><span class="t" style="left:774.40px;top:263.90px;font:700 10.5px/1.2 'DejaVu Sans', 'Liberation Sans', sans-serif;color:#111;transform:scaleX(0.9117);transform-origin:left center;">o da não conversão</span><span class="t" style="left:886.80px;top:263.90px;font:700 10.5px/1.2 'DejaVu Sans', 'Liberation Sans', sans-serif;color:#111;transform:scaleX(0.8806);transform-origin:left center;">Motivo da não</span><div class="a" style="left:39px;top:46px;width:6px;height:830px;background:linear-gradient(90deg,rgba(0,0,0,.10),rgba(0,0,0,0))"></div><div class="a" style="left:39px;top:84px;width:931px;height:6px;background:linear-gradient(180deg,rgba(0,0,0,.13),rgba(0,0,0,0))"></div><div class="a" style="left:39px;top:51px;width:931px;height:33px;background:#fff"></div><span class="t" style="left:55.40px;top:61.00px;font:400 13px/1.2 'DejaVu Sans', 'Liberation Sans', sans-serif;color:#444;transform:scaleX(0.9870);transform-origin:left center;">Atendimentos em Loja (SENDDECOR.Fila.MasterPageFila) | 21.134995</span><span class="t" style="left:508.60px;top:61.00px;font:400 13px/1.2 'DejaVu Sans', 'Liberation Sans', sans-serif;color:#444;">|</span><span class="t" style="left:518.20px;top:61.00px;font:400 13px/1.2 'DejaVu Sans', 'Liberation Sans', sans-serif;color:#444;transform:scaleX(0.9484);transform-origin:left center;">Homologação</span><span class="t" style="left:608.60px;top:61.00px;font:400 13px/1.2 'DejaVu Sans', 'Liberation Sans', sans-serif;color:#444;">|</span><span class="t" style="left:617.90px;top:61.00px;font:400 13px/1.2 'DejaVu Sans', 'Liberation Sans', sans-serif;color:#444;">S</span><div class="a" style="left:617.1px;top:60.9px;width:88.79999999999995px;height:14.899999999999999px;overflow:hidden"><i class="a" style="left:0.00px;top:0.00px;width:10.37px;height:9.50px;background:#dddddd"></i><i class="a" style="left:9.87px;top:0.00px;width:10.37px;height:9.50px;background:#dbdad8"></i><i class="a" style="left:19.73px;top:0.00px;width:10.37px;height:9.50px;background:#eceef2"></i><i class="a" style="left:29.60px;top:0.00px;width:10.37px;height:9.50px;background:#e6e5e0"></i><i class="a" style="left:39.47px;top:0.00px;width:10.37px;height:9.50px;background:#dcdada"></i><i class="a" style="left:49.33px;top:0.00px;width:10.37px;height:9.50px;background:#ced2d6"></i><i class="a" style="left:59.20px;top:0.00px;width:10.37px;height:9.50px;background:#dfdcd8"></i><i class="a" style="left:69.07px;top:0.00px;width:10.37px;height:9.50px;background:#e0e4e8"></i><i class="a" style="left:78.93px;top:0.00px;width:10.37px;height:9.50px;background:#eaeaea"></i><i class="a" style="left:0.00px;top:9.00px;width:10.37px;height:6.40px;background:#e6e6e6"></i><i class="a" style="left:9.87px;top:9.00px;width:10.37px;height:6.40px;background:#e4e3e1"></i><i class="a" style="left:19.73px;top:9.00px;width:10.37px;height:6.40px;background:#e2e2e2"></i><i class="a" style="left:29.60px;top:9.00px;width:10.37px;height:6.40px;background:#dcdcdc"></i><i class="a" style="left:39.47px;top:9.00px;width:10.37px;height:6.40px;background:#e1e2e4"></i><i class="a" style="left:49.33px;top:9.00px;width:10.37px;height:6.40px;background:#e2e3e5"></i><i class="a" style="left:59.20px;top:9.00px;width:10.37px;height:6.40px;background:#ece8e2"></i><i class="a" style="left:69.07px;top:9.00px;width:10.37px;height:6.40px;background:#d8dade"></i><i class="a" style="left:78.93px;top:9.00px;width:10.37px;height:6.40px;background:#e4e5e7"></i></div><div class="a" style="left:-5px;top:46px;width:44px;height:830px;background:#f9fafc"></div><div class="a" style="left:-5px;top:46px;width:5px;height:830px;background:linear-gradient(90deg,#f6f6f6,#ececec 30%,#e0e0e0)"></div><div class="a" style="left:-5px;top:279.0px;width:44px;height:37.5px;background:#f2f3f4"></div><div class="a" style="left:-5.5px;top:279.0px;width:3.5px;height:37.5px;background:#2f72b2"></div><svg class="a" style="left:4.1px;top:54.8px" width="24.8" height="24.4" viewBox="0 0 24.8 24.4"><path fill="#e4a828" d="M11.3 0.6 Q12.3 -0.3 13.3 0.6 L24.3 10.1 Q25 10.8 24.5 11.6 L23.7 12.9 Q23.2 13.5 22.6 12.9 L21.4 11.7 L3.4 11.7 L2.2 12.9 Q1.6 13.5 1.1 12.9 L0.3 11.6 Q-0.2 10.8 0.5 10.1 L3 7.8 L3 4 Q3 3 4 3 L6.2 3 Q7.1 3 7.1 3.9 L7.1 4.3 Z"/><path fill="#0f72b0" stroke="#fff" stroke-width="1" paint-order="stroke" d="M7.2 9.1 Q7.2 8.2 8.2 8.2 L16.7 8.2 Q17.7 8.2 17.7 9.1 L16.3 12 L16.1 17 L8.8 17 L8.6 12 Z"/><path fill="#0f72b0" stroke="#fff" stroke-width="1" paint-order="stroke" d="M3 13.4 Q3 11.2 5.1 11.2 Q7.3 11.2 7.3 13.4 L7.6 17.2 Q7.7 18 8.6 18 L16.3 18 Q17.2 18 17.3 17.2 L17.6 13.4 Q17.6 11.2 19.8 11.2 Q21.9 11.2 21.9 13.4 L21.9 18.5 Q21.9 20.6 20.2 21.6 L18.9 22.5 L18.2 24.3 L17.2 24.3 L16.6 22.5 L8.3 22.5 L7.7 24.3 L6.7 24.3 L6 22.5 L4.7 21.6 Q3 20.6 3 18.5 Z"/><path fill="none" stroke="#a9cde6" stroke-width="0.9" d="M7.8 11.6 L8.1 16.7 Q8.2 17.7 9.2 17.7 L15.7 17.7 Q16.7 17.7 16.8 16.7 L17.1 11.6"/></svg><svg class="a" style="left:11.00px;top:104.00px;" width="12.20" height="9.60" viewBox="25.859859505812633 -1283.25 1612.2802809883747 1283.25" preserveAspectRatio="none"><path transform="scale(1,-1)" fill="#3a3a3a" d="M1408 544C1408 546 1408 548 1407 550L832 1024L257 550C257 548 256 546 256 544V64C256 29 285 0 320 0H704V384H960V0H1344C1379 0 1408 29 1408 64ZM1631 613C1642 626 1640 647 1627 658L1408 840V1248C1408 1266 1394 1280 1376 1280H1184C1166 1280 1152 1266 1152 1248V1053L908 1257C866 1292 798 1292 756 1257L37 658C24 647 22 626 33 613L95 539C100 533 108 529 116 528C125 527 133 530 140 535L832 1112L1524 535C1530 530 1537 528 1545 528C1546 528 1547 528 1548 528C1556 529 1564 533 1569 539L1631 613Z"/></svg><svg class="a" style="left:10.20px;top:139.90px;" width="13.80" height="12.60" viewBox="0 -1520 1920 1761" preserveAspectRatio="none"><path transform="scale(1,-1)" fill="#3a3a3a" d="M896 640C896 499 781 384 640 384C499 384 384 499 384 640C384 781 499 896 640 896C781 896 896 781 896 640ZM1664 128C1664 58 1607 0 1536 0C1466 0 1408 57 1408 128C1408 198 1466 256 1536 256C1606 256 1664 198 1664 128ZM1664 1152C1664 1082 1607 1024 1536 1024C1466 1024 1408 1081 1408 1152C1408 1222 1466 1280 1536 1280C1606 1280 1664 1222 1664 1152ZM1280 731C1280 745 1270 758 1256 761L1104 784C1095 812 1083 839 1070 866C1098 905 1128 941 1157 980C1161 986 1164 992 1164 999C1164 1027 1046 1135 1020 1159C1014 1164 1007 1167 999 1167C992 1167 985 1165 979 1160L861 1071C837 1083 812 1094 786 1102L763 1255C761 1269 747 1280 733 1280H547C533 1280 521 1270 517 1256C504 1207 499 1152 494 1102C467 1093 442 1083 417 1070L302 1160C296 1164 289 1167 281 1167C252 1167 140 1046 120 1019C115 1013 113 1006 113 999C113 992 116 985 120 979C152 941 182 904 210 864C197 839 186 814 178 788L23 764C10 762 0 747 0 734V549C0 535 10 522 24 520L176 496C185 468 197 441 211 414C182 375 152 338 123 300C119 294 116 288 116 281C116 252 234 145 260 121C266 116 273 113 281 113C288 113 296 115 301 120L419 209C443 197 468 186 494 178L517 25C519 11 533 0 547 0H733C747 0 759 10 763 24C776 73 781 128 786 179C813 187 838 197 863 210L978 120C984 116 991 113 999 113C1028 113 1140 235 1160 262C1165 267 1167 274 1167 281C1167 289 1164 295 1160 301C1128 339 1098 376 1070 416C1083 441 1094 466 1102 492L1257 516C1270 518 1280 533 1280 546ZM1920 198C1920 213 1791 227 1771 229C1763 247 1753 265 1741 281C1750 301 1792 401 1792 419C1792 421 1791 424 1788 426C1776 433 1669 496 1664 496L1658 494C1624 460 1594 421 1566 382C1556 383 1546 384 1536 384C1526 384 1516 383 1506 382C1496 397 1421 496 1408 496C1403 496 1296 432 1284 426C1281 424 1280 421 1280 419C1280 402 1322 301 1331 281C1319 265 1309 247 1301 229C1281 227 1152 213 1152 198V58C1152 43 1281 29 1301 27C1309 8 1319 -9 1331 -25C1322 -45 1280 -146 1280 -163C1280 -165 1281 -168 1284 -170C1296 -177 1403 -241 1408 -241C1421 -241 1496 -141 1506 -126C1516 -127 1526 -128 1536 -128C1546 -128 1556 -127 1566 -126C1576 -141 1651 -241 1664 -241C1669 -241 1776 -177 1788 -170C1791 -168 1792 -166 1792 -163C1792 -145 1750 -45 1741 -25C1753 -9 1763 8 1771 27C1791 29 1920 43 1920 58ZM1920 1222C1920 1237 1791 1251 1771 1253C1763 1271 1753 1289 1741 1305C1750 1325 1792 1425 1792 1443C1792 1445 1791 1448 1788 1450C1776 1457 1669 1520 1664 1520L1658 1518C1624 1484 1594 1445 1566 1406C1556 1407 1546 1408 1536 1408C1526 1408 1516 1407 1506 1406C1496 1421 1421 1520 1408 1520C1403 1520 1296 1456 1284 1450C1281 1448 1280 1445 1280 1443C1280 1426 1322 1325 1331 1305C1319 1289 1309 1271 1301 1253C1281 1251 1152 1237 1152 1222V1082C1152 1067 1281 1053 1301 1051C1309 1032 1319 1015 1331 999C1322 979 1280 878 1280 861C1280 859 1281 856 1284 854C1296 847 1403 783 1408 783C1421 783 1496 883 1506 898C1516 897 1526 896 1536 896C1546 896 1556 897 1566 898C1576 883 1651 783 1664 783C1669 783 1776 847 1788 854C1791 856 1792 858 1792 861C1792 879 1750 979 1741 999C1753 1015 1763 1032 1771 1051C1791 1053 1920 1067 1920 1082Z"/></svg><svg class="a" style="left:11.20px;top:179.60px;" width="11.80" height="10.60" viewBox="0 -1280 1536 1408" preserveAspectRatio="none"><path transform="scale(1,-1)" fill="#3a3a3a" d="M352 128H0V0H352ZM704 256H448C413 256 384 227 384 192V-64C384 -99 413 -128 448 -128H704C739 -128 768 -99 768 -64V192C768 227 739 256 704 256ZM864 640H0V512H864ZM224 1152H0V1024H224ZM1536 128H800V0H1536ZM576 1280H320C285 1280 256 1251 256 1216V960C256 925 285 896 320 896H576C611 896 640 925 640 960V1216C640 1251 611 1280 576 1280ZM1216 768H960C925 768 896 739 896 704V448C896 413 925 384 960 384H1216C1251 384 1280 413 1280 448V704C1280 739 1251 768 1216 768ZM1536 640H1312V512H1536ZM1536 1152H672V1024H1536Z"/></svg><svg class="a" style="left:10.70px;top:215.20px;" width="12.80" height="12.60" viewBox="15 -1527 1777 1783" preserveAspectRatio="none"><path transform="scale(1,-1)" fill="#3a3a3a" d="M381 -84C381 -15 337 37 270 53L365 168V256H32V104H138V157C170 157 203 159 235 159V158C192 119 159 68 123 22L149 -34C190 -31 254 -34 254 -90C254 -130 217 -147 182 -147C144 -147 103 -127 76 -102L19 -190C64 -235 128 -256 191 -256C295 -256 381 -194 381 -84ZM383 543H278V483H151C154 561 371 594 371 742C371 841 291 896 198 896C122 896 54 857 21 788L106 729C123 757 152 787 187 787C220 787 241 769 241 735C241 651 15 623 15 438C15 420 18 402 21 384H383ZM1792 224C1792 242 1777 256 1760 256H544C526 256 512 242 512 224V32C512 15 526 0 544 0H1760C1777 0 1792 15 1792 32ZM384 1123H276V1527H170L34 1400L105 1324C124 1341 144 1356 155 1378H157V1366C157 1285 156 1204 156 1123H49V1024H384ZM1792 736C1792 754 1777 768 1760 768H544C526 768 512 754 512 736V544C512 527 526 512 544 512H1760C1777 512 1792 527 1792 544ZM1792 1248C1792 1265 1777 1280 1760 1280H544C526 1280 512 1265 512 1248V1056C512 1039 526 1024 544 1024H1760C1777 1024 1792 1039 1792 1056Z"/></svg><svg class="a" style="left:10.40px;top:254.00px;" width="13.40" height="10.80" viewBox="0 -1344 1792 1408" preserveAspectRatio="none"><path transform="scale(1,-1)" fill="#3a3a3a" d="M384 128C384 234 298 320 192 320C86 320 0 234 0 128C0 22 86 -64 192 -64C298 -64 384 22 384 128ZM384 640C384 746 298 832 192 832C86 832 0 746 0 640C0 534 86 448 192 448C298 448 384 534 384 640ZM1792 224C1792 241 1777 256 1760 256H544C527 256 512 241 512 224V32C512 15 527 0 544 0H1760C1777 0 1792 15 1792 32ZM384 1152C384 1258 298 1344 192 1344C86 1344 0 1258 0 1152C0 1046 86 960 192 960C298 960 384 1046 384 1152ZM1792 736C1792 753 1777 768 1760 768H544C527 768 512 753 512 736V544C512 527 527 512 544 512H1760C1777 512 1792 527 1792 544ZM1792 1248C1792 1265 1777 1280 1760 1280H544C527 1280 512 1265 512 1248V1056C512 1039 527 1024 544 1024H1760C1777 1024 1792 1039 1792 1056Z"/></svg><svg class="a" style="left:11.30px;top:291.70px;" width="11.60" height="11.20" viewBox="0 -1408 1536 1536" preserveAspectRatio="none"><path transform="scale(1,-1)" fill="#000" d="M896 992C896 1010 882 1024 864 1024H800C782 1024 768 1010 768 992V640H544C526 640 512 626 512 608V544C512 526 526 512 544 512H864C882 512 896 526 896 544ZM1312 640C1312 340 1068 96 768 96C468 96 224 340 224 640C224 940 468 1184 768 1184C1068 1184 1312 940 1312 640ZM1536 640C1536 1064 1192 1408 768 1408C344 1408 0 1064 0 640C0 216 344 -128 768 -128C1192 -128 1536 216 1536 640Z"/></svg><svg class="a" style="left:11.25px;top:329.00px;" width="11.70" height="13.00" viewBox="0 -1536 1536 1792" preserveAspectRatio="none"><path transform="scale(1,-1)" fill="#3a3a3a" d="M1504 -64H32C14 -64 0 -78 0 -96V-224C0 -242 14 -256 32 -256H1504C1522 -256 1536 -242 1536 -224V-96C1536 -78 1522 -64 1504 -64ZM130 0H1406C1387 337 1112 518 928 640C1112 762 1387 943 1406 1280H130C149 943 424 762 608 640C424 518 149 337 130 0ZM1504 1536H32C14 1536 0 1522 0 1504V1376C0 1358 14 1344 32 1344H1504C1522 1344 1536 1358 1536 1376V1504C1536 1522 1522 1536 1504 1536Z"/></svg><div class="a" style="left:-10px;top:0px;width:207px;height:46px;background:#2869a6"></div><div class="a" style="left:197px;top:0px;width:773px;height:46px;background:#3173b0"></div><div class="a" style="left:-10px;top:41px;width:980px;height:5px;background:linear-gradient(180deg,rgba(20,80,150,0),rgba(20,80,150,.12) 55%,rgba(20,80,150,.6))"></div><span class="t" style="left:15.40px;top:12.00px;font:700 16.5px/1.2 'Liberation Sans', sans-serif;color:#fff;transform:scaleX(0.8917);transform-origin:left center;">SEND DECOR</span><div class="a" style="left:205.6px;top:14.2px;width:21.80000000000001px;height:3.1999999999999993px;background:#fff;border-radius:1px"></div><div class="a" style="left:205.6px;top:19.4px;width:21.80000000000001px;height:3.1999999999999993px;background:#fff;border-radius:1px"></div><div class="a" style="left:205.6px;top:24.6px;width:21.80000000000001px;height:3.1999999999999957px;background:#fff;border-radius:1px"></div><svg class="a" style="left:562.43px;top:15.20px;" width="16.34" height="17.60" viewBox="64 -1536 1664 1792" preserveAspectRatio="none"><path transform="scale(1,-1)" fill="#fff" stroke="#fff" stroke-width="45" d="M912 -160C912 -169 905 -176 896 -176C799 -176 720 -97 720 0C720 9 727 16 736 16C745 16 752 9 752 0C752 -79 817 -144 896 -144C905 -144 912 -151 912 -160ZM246 128C425 330 512 604 512 960C512 1089 634 1280 896 1280C1158 1280 1280 1089 1280 960C1280 604 1367 330 1546 128ZM1728 128C1580 253 1408 477 1408 960C1408 1152 1249 1362 984 1401C989 1413 992 1426 992 1440C992 1493 949 1536 896 1536C843 1536 800 1493 800 1440C800 1426 803 1413 808 1401C543 1362 384 1152 384 960C384 477 212 253 64 128C64 58 122 0 192 0H640C640 -141 755 -256 896 -256C1037 -256 1152 -141 1152 0H1600C1670 0 1728 58 1728 128Z"/></svg><div class="a" style="left:574.2px;top:5.9px;width:16.9px;height:16px;border-radius:50%;background:#fff"></div><span class="t" style="left:579.99px;top:8.90px;font:700 9px/1.2 'Liberation Sans', sans-serif;color:#2f6fb0;">4</span><span class="t" style="left:619.40px;top:17.60px;font:400 11.5px/1.2 'DejaVu Sans', 'Liberation Sans', sans-serif;color:#fff;">(2) ·</span><div class="a" style="left:642.1px;top:16.1px;width:58.0px;height:17.6px;overflow:hidden"><i class="a" style="left:0.00px;top:0.00px;width:10.17px;height:9.10px;background:#3976b3"></i><i class="a" style="left:9.67px;top:0.00px;width:10.17px;height:9.10px;background:#6c9bcb"></i><i class="a" style="left:19.33px;top:0.00px;width:10.17px;height:9.10px;background:#5e90c5"></i><i class="a" style="left:29.00px;top:0.00px;width:10.17px;height:9.10px;background:#5189c1"></i><i class="a" style="left:38.67px;top:0.00px;width:10.17px;height:9.10px;background:#4a84be"></i><i class="a" style="left:48.33px;top:0.00px;width:10.17px;height:9.10px;background:#3876b3"></i><i class="a" style="left:0.00px;top:8.60px;width:10.17px;height:9.50px;background:#3575b2"></i><i class="a" style="left:9.67px;top:8.60px;width:10.17px;height:9.50px;background:#4d86bf"></i><i class="a" style="left:19.33px;top:8.60px;width:10.17px;height:9.50px;background:#5b8ec4"></i><i class="a" style="left:29.00px;top:8.60px;width:10.17px;height:9.50px;background:#548ac1"></i><i class="a" style="left:38.67px;top:8.60px;width:10.17px;height:9.50px;background:#4a84be"></i><i class="a" style="left:48.33px;top:8.60px;width:10.17px;height:9.50px;background:#3373b0"></i></div><svg class="a" style="left:741.10px;top:15.20px;" width="13.00" height="13.60" viewBox="0 -1408 1280 1536" preserveAspectRatio="none"><path transform="scale(1,-1)" fill="#fff" d="M1280 137C1280 400 1215 704 953 704C872 625 762 576 640 576C518 576 408 625 327 704C65 704 0 400 0 137C0 -9 96 -128 213 -128H1067C1184 -128 1280 -9 1280 137ZM1024 1024C1024 1236 852 1408 640 1408C428 1408 256 1236 256 1024C256 812 428 640 640 640C852 640 1024 812 1024 1024Z"/></svg><span class="t" style="left:761.40px;top:15.80px;font:400 10.5px/1.2 'DejaVu Sans', 'Liberation Sans', sans-serif;color:#fff;transform:scaleX(1.0807);transform-origin:left center;">SUPERVISOR (SUPERVISOR)</span><div class="a" style="left:923.4px;top:21.8px;width:6.600000000000023px;height:3.1999999999999993px;width:0;height:0;border-left:3.2px solid transparent;border-right:3.2px solid transparent;border-top:3.2px solid #fff"></div><div class="a" style="left:107px;top:90.6px;width:734.4px;height:739.0px;background:#fff;border-radius:6px;box-shadow:0 5px 14px rgba(0,0,0,.5), 0 0 2px rgba(0,0,0,.3)"></div><div class="a" style="left:107px;top:121.5px;width:734px;height:1.0px;background:#f3f3f3"></div><span class="t" style="left:113.80px;top:96.60px;font:400 13px/1.2 'Liberation Sans', sans-serif;color:#585858;transform:scaleX(0.9669);transform-origin:left center;">Observações do atendimento</span><span class="t" style="left:822.53px;top:99.30px;font:700 17px/1.2 'Liberation Sans', sans-serif;color:#c2c2c2;-webkit-text-stroke:.5px #c6c6c6;">×</span><div class="a" style="left:118.2px;top:135.2px;width:76.99999999999999px;height:25.80000000000001px;background:#3373b1;border-radius:3.5px;border:1px solid #2e6da4;box-sizing:border-box"></div><span class="t" style="left:130.32px;top:140.90px;font:700 11px/1.2 'Liberation Sans', sans-serif;color:#fff;transform:scaleX(0.9798);transform-origin:center center;">Confirmar</span><div class="a" style="left:199.4px;top:135.2px;width:76.6px;height:25.80000000000001px;background:#fff;border-radius:3.5px;border:1px solid #ccc;box-sizing:border-box"></div><span class="t" style="left:219.96px;top:140.90px;font:700 11px/1.2 'Liberation Sans', sans-serif;color:#111;transform:scaleX(0.9701);transform-origin:center center;">Fechar</span><div class="a" style="left:118px;top:170px;width:712px;height:87.60000000000002px;border:1px solid #dedede;box-sizing:border-box;background:#fff;box-shadow:0 1px 1px rgba(0,0,0,.06)"></div><div class="a" style="left:119px;top:171px;width:710px;height:27.80000000000001px;background:#f7f7f7;border-bottom:1px solid #e2e2e2;box-sizing:border-box"></div><span class="t" style="left:129.80px;top:174.20px;font:400 14px/1.2 'Liberation Sans', sans-serif;color:#111;transform:scaleX(0.9001);transform-origin:left center;">Atendimento iniciado</span><div class="a" style="left:118px;top:267.3px;width:712px;height:119.89999999999998px;border:1px solid #dedede;box-sizing:border-box;background:#fff;box-shadow:0 1px 1px rgba(0,0,0,.06)"></div><div class="a" style="left:119px;top:268.3px;width:710px;height:27.5px;background:#f7f7f7;border-bottom:1px solid #e2e2e2;box-sizing:border-box"></div><span class="t" style="left:129.80px;top:271.20px;font:400 14px/1.2 'Liberation Sans', sans-serif;color:#111;transform:scaleX(0.8981);transform-origin:left center;">Informações do cliente</span><div class="a" style="left:118px;top:396px;width:712px;height:407.70000000000005px;border:1px solid #dedede;box-sizing:border-box;background:#fff;box-shadow:0 1px 1px rgba(0,0,0,.06)"></div><div class="a" style="left:119px;top:397px;width:710px;height:27.399999999999977px;background:#f7f7f7;border-bottom:1px solid #e2e2e2;box-sizing:border-box"></div><span class="t" style="left:129.80px;top:399.80px;font:400 14px/1.2 'Liberation Sans', sans-serif;color:#111;transform:scaleX(0.8984);transform-origin:left center;">Observações do atendimento</span><span class="t" style="left:128.30px;top:204.30px;font:700 12px/1.2 'Liberation Sans', sans-serif;color:#4e4e4e;transform:scaleX(0.9216);transform-origin:left center;">Uop</span><span class="t" style="left:371.20px;top:204.30px;font:700 12px/1.2 'Liberation Sans', sans-serif;color:#4e4e4e;transform:scaleX(0.9746);transform-origin:left center;">Vendedor</span><span class="t" style="left:614.20px;top:204.30px;font:700 12px/1.2 'Liberation Sans', sans-serif;color:#4e4e4e;transform:scaleX(0.9854);transform-origin:left center;">Início do atendimento</span><span class="t" style="left:129.00px;top:227.10px;font:400 12.5px/1.2 'Liberation Sans', sans-serif;color:#111;transform:scaleX(0.8629);transform-origin:left center;">2</span><span class="t" style="left:371.90px;top:227.10px;font:400 12.5px/1.2 'Liberation Sans', sans-serif;color:#111;transform:scaleX(0.8133);transform-origin:left center;">PAMELA</span><span class="t" style="left:614.70px;top:227.10px;font:400 12.5px/1.2 'Liberation Sans', sans-serif;color:#111;transform:scaleX(0.9933);transform-origin:left center;">11/03/2026 10:31:04</span><div class="a" style="left:415.8px;top:221.8px;width:149.2px;height:19.0px;overflow:hidden"><i class="a" style="left:0.00px;top:0.00px;width:10.45px;height:9.70px;background:#ebebeb"></i><i class="a" style="left:9.95px;top:0.00px;width:10.45px;height:9.70px;background:#ebebeb"></i><i class="a" style="left:19.89px;top:0.00px;width:10.45px;height:9.70px;background:#e6e6e6"></i><i class="a" style="left:29.84px;top:0.00px;width:10.45px;height:9.70px;background:#f0f0f0"></i><i class="a" style="left:39.79px;top:0.00px;width:10.45px;height:9.70px;background:#f3f3f3"></i><i class="a" style="left:49.73px;top:0.00px;width:10.45px;height:9.70px;background:#f1f1f1"></i><i class="a" style="left:59.68px;top:0.00px;width:10.45px;height:9.70px;background:#f3f3f3"></i><i class="a" style="left:69.63px;top:0.00px;width:10.45px;height:9.70px;background:#f2f2f2"></i><i class="a" style="left:79.57px;top:0.00px;width:10.45px;height:9.70px;background:#f4f4f4"></i><i class="a" style="left:89.52px;top:0.00px;width:10.45px;height:9.70px;background:#efefef"></i><i class="a" style="left:99.47px;top:0.00px;width:10.45px;height:9.70px;background:#f0f0f0"></i><i class="a" style="left:109.41px;top:0.00px;width:10.45px;height:9.70px;background:#f0f0f0"></i><i class="a" style="left:119.36px;top:0.00px;width:10.45px;height:9.70px;background:#f3f3f3"></i><i class="a" style="left:129.31px;top:0.00px;width:10.45px;height:9.70px;background:#f4f4f4"></i><i class="a" style="left:139.25px;top:0.00px;width:10.45px;height:9.70px;background:#f7f7f7"></i><i class="a" style="left:0.00px;top:9.20px;width:10.45px;height:10.30px;background:#cccccc"></i><i class="a" style="left:9.95px;top:9.20px;width:10.45px;height:10.30px;background:#c2c2c2"></i><i class="a" style="left:19.89px;top:9.20px;width:10.45px;height:10.30px;background:#d2d2d2"></i><i class="a" style="left:29.84px;top:9.20px;width:10.45px;height:10.30px;background:#bebebe"></i><i class="a" style="left:39.79px;top:9.20px;width:10.45px;height:10.30px;background:#c2c2c2"></i><i class="a" style="left:49.73px;top:9.20px;width:10.45px;height:10.30px;background:#d4d4d4"></i><i class="a" style="left:59.68px;top:9.20px;width:10.45px;height:10.30px;background:#b6b6b6"></i><i class="a" style="left:69.63px;top:9.20px;width:10.45px;height:10.30px;background:#b6b6b6"></i><i class="a" style="left:79.57px;top:9.20px;width:10.45px;height:10.30px;background:#b8b8b8"></i><i class="a" style="left:89.52px;top:9.20px;width:10.45px;height:10.30px;background:#d2d2d2"></i><i class="a" style="left:99.47px;top:9.20px;width:10.45px;height:10.30px;background:#c8c8c8"></i><i class="a" style="left:109.41px;top:9.20px;width:10.45px;height:10.30px;background:#c6c6c6"></i><i class="a" style="left:119.36px;top:9.20px;width:10.45px;height:10.30px;background:#c0c0c0"></i><i class="a" style="left:129.31px;top:9.20px;width:10.45px;height:10.30px;background:#c2c2c2"></i><i class="a" style="left:139.25px;top:9.20px;width:10.45px;height:10.30px;background:#d2d2d2"></i></div><span class="t" style="left:232.51px;top:309.30px;font:700 12.5px/1.2 'Liberation Sans', sans-serif;color:#4e4e4e;transform:scaleX(0.9595);transform-origin:right center;">Cliente</span><span class="t" style="left:306.80px;top:309.30px;font:400 12px/1.2 'Liberation Sans', sans-serif;color:#8a8a8a;transform:scaleX(0.8717);transform-origin:left center;">NÃO INFORMADO</span><span class="t" style="left:223.72px;top:336.30px;font:700 12.5px/1.2 'Liberation Sans', sans-serif;color:#4e4e4e;transform:scaleX(0.9508);transform-origin:right center;">Telefone</span><span class="t" style="left:306.80px;top:336.30px;font:400 12px/1.2 'Liberation Sans', sans-serif;color:#8a8a8a;transform:scaleX(0.8717);transform-origin:left center;">NÃO INFORMADO</span><span class="t" style="left:236.68px;top:363.30px;font:700 12.5px/1.2 'Liberation Sans', sans-serif;color:#4e4e4e;transform:scaleX(0.9329);transform-origin:right center;">E-mail</span><span class="t" style="left:306.80px;top:363.30px;font:400 12px/1.2 'Liberation Sans', sans-serif;color:#8a8a8a;transform:scaleX(0.8717);transform-origin:left center;">NÃO INFORMADO</span><div class="a" style="left:123.4px;top:441px;width:328.6px;height:193px;border:1px solid #e0e0e0;border-radius:4px;box-sizing:border-box"></div><div class="a" style="left:145.5px;top:439px;width:149.2px;height:5px;background:#fff"></div><span class="t" style="left:151.50px;top:431.60px;font:400 15px/1.2 'Liberation Sans', sans-serif;color:#5a5a5a;transform:scaleX(0.9580);transform-origin:left center;">Adicionar observação</span><div class="a" style="left:488.3px;top:441px;width:327.99999999999994px;height:99px;border:1px solid #e0e0e0;border-radius:4px;box-sizing:border-box"></div><div class="a" style="left:509.70000000000005px;top:439px;width:96.0px;height:5px;background:#fff"></div><span class="t" style="left:515.70px;top:431.60px;font:400 15px/1.2 'Liberation Sans', sans-serif;color:#5a5a5a;transform:scaleX(0.9618);transform-origin:left center;">Observações</span><div class="a" style="left:488.3px;top:562px;width:327.99999999999994px;height:73.79999999999995px;border:1px solid #e0e0e0;border-radius:4px;box-sizing:border-box"></div><div class="a" style="left:509.70000000000005px;top:560px;width:118.0px;height:5px;background:#fff"></div><span class="t" style="left:515.70px;top:552.80px;font:400 15px/1.2 'Liberation Sans', sans-serif;color:#5a5a5a;transform:scaleX(0.9578);transform-origin:left center;">Próximo Contato</span><div class="a" style="left:123.4px;top:656px;width:328.6px;height:132px;border:1px solid #e0e0e0;border-radius:4px;box-sizing:border-box"></div><div class="a" style="left:145.5px;top:654px;width:140.0px;height:5px;background:#fff"></div><span class="t" style="left:151.50px;top:646.60px;font:400 15px/1.2 'Liberation Sans', sans-serif;color:#5a5a5a;transform:scaleX(0.9610);transform-origin:left center;">Usuários envolvidos</span><div class="a" style="left:142.2px;top:477.6px;width:314.8px;height:138.60000000000002px;border:1px solid #d9d9d9;box-sizing:border-box"></div><span class="t" style="left:151.00px;top:479.40px;font:400 9.5px/1.2 'DejaVu Sans', 'Liberation Sans', sans-serif;color:#000;transform:scaleX(1.0153);transform-origin:left center;">teste após ajuste</span><svg class="a" style="left:447px;top:606px" width="9" height="9" viewBox="0 0 9 9"><path d="M1 8.5L8.5 1M4.5 8.5L8.5 4.5" stroke="#444" stroke-width="1" fill="none"/></svg><span class="t" style="left:502.00px;top:479.30px;font:700 11px/1.2 'DejaVu Sans', 'Liberation Sans', sans-serif;color:#3c3c3c;transform:scaleX(1.0340);transform-origin:left center;">SUPERVISOR - 23/03/2026 10:41:53:</span><span class="t" style="left:502.00px;top:504.00px;font:400 11px/1.2 'DejaVu Sans', 'Liberation Sans', sans-serif;color:#444;transform:scaleX(0.9890);transform-origin:left center;">Teste Forbiden</span><span class="t" style="left:502.00px;top:605.00px;font:700 12px/1.2 'Liberation Sans', sans-serif;color:#333;transform:scaleX(0.9879);transform-origin:left center;">Data/Hora</span><div class="a" style="left:588px;top:598.4px;width:146.79999999999995px;height:22.800000000000068px;border:1px solid #dfdfdf;box-sizing:border-box;background:#fff"></div><div class="a" style="left:714px;top:598.4px;width:1px;height:22.800000000000068px;background:#dfdfdf"></div><span class="t" style="left:649.40px;top:602.60px;font:400 12px/1.2 'Liberation Sans', sans-serif;color:#222;transform:scaleX(1.3482);transform-origin:left center;word-spacing:2px;">/ /</span><span class="t" style="left:682.70px;top:604.10px;font:400 10px/1.2 'Liberation Sans', sans-serif;color:#222;transform:scaleX(1.1266);transform-origin:left center;">00:00</span><svg class="a" style="left:720.42px;top:605.70px;" width="8.36" height="9.00" viewBox="0 -1536 1664 1792" preserveAspectRatio="none"><path transform="scale(1,-1)" fill="#dedede" d="M128 -128V896H1536V-128ZM512 1088C512 1070 498 1056 480 1056H416C398 1056 384 1070 384 1088V1376C384 1394 398 1408 416 1408H480C498 1408 512 1394 512 1376V1088ZM1280 1088C1280 1070 1266 1056 1248 1056H1184C1166 1056 1152 1070 1152 1088V1376C1152 1394 1166 1408 1184 1408H1248C1266 1408 1280 1394 1280 1376V1088ZM1664 1152C1664 1222 1606 1280 1536 1280H1408V1376C1408 1464 1336 1536 1248 1536H1184C1096 1536 1024 1464 1024 1376V1280H640V1376C640 1464 568 1536 480 1536H416C328 1536 256 1464 256 1376V1280H128C58 1280 0 1222 0 1152V-128C0 -198 58 -256 128 -256H1536C1606 -256 1664 -198 1664 -128Z"/></svg><div class="a" style="left:139.2px;top:692.2px;width:299.0px;height:81.79999999999995px;border:1px solid #e0e0e0;box-sizing:border-box"></div><div class="a" style="left:140.2px;top:693.2px;width:297.0px;height:26.799999999999955px;background:#f6f6f6;border-bottom:1.5px solid #e0e0e0;box-sizing:border-box"></div><div class="a" style="left:140.2px;top:746.4px;width:297.0px;height:1.0px;background:#e4e4e4"></div><span class="t" style="left:146.00px;top:700.20px;font:700 9.3px/1.2 'DejaVu Sans', 'Liberation Sans', sans-serif;color:#111;transform:scaleX(1.0339);transform-origin:left center;">Usuário</span><span class="t" style="left:151.00px;top:729.00px;font:400 9.8px/1.2 'Liberation Sans', sans-serif;color:#000;transform:scaleX(0.8455);transform-origin:left center;">PAMELA</span><div class="a" style="left:184.3px;top:729.8px;width:8.699999999999989px;height:8.800000000000068px;background:#dadada"></div><span class="t" style="left:151.00px;top:756.00px;font:400 9.8px/1.2 'Liberation Sans', sans-serif;color:#000;transform:scaleX(0.8117);transform-origin:left center;">SUPERVISOR</span><div class="a" style="left:366.1px;top:103.0px;width:32.6px;height:32.6px;border-radius:50%;background:#fff;box-shadow:1px 1.5px 4px rgba(0,0,0,.6)"></div><div class="a" style="left:369.8px;top:106.8px;width:25.2px;height:25.2px;border-radius:50%;background:#003f87"></div><span class="t" style="left:376.01px;top:109.25px;font:700 18.5px/1.2 'DejaVu Sans', 'Liberation Sans', sans-serif;color:#fff;">3</span><div class="a" style="left:318.4px;top:520.3px;width:32.6px;height:32.6px;border-radius:50%;background:#fff;box-shadow:1px 1.5px 4px rgba(0,0,0,.6)"></div><div class="a" style="left:322.1px;top:524.0px;width:25.2px;height:25.2px;border-radius:50%;background:#003f87"></div><span class="t" style="left:328.31px;top:526.45px;font:700 18.5px/1.2 'DejaVu Sans', 'Liberation Sans', sans-serif;color:#fff;">4</span><div class="a" style="left:132.4px;top:108.3px;width:32.6px;height:32.6px;border-radius:50%;background:#fff;box-shadow:1px 1.5px 4px rgba(0,0,0,.6)"></div><div class="a" style="left:136.2px;top:112.0px;width:25.2px;height:25.2px;border-radius:50%;background:#003f87"></div><span class="t" style="left:142.31px;top:114.55px;font:700 18.5px/1.2 'DejaVu Sans', 'Liberation Sans', sans-serif;color:#fff;">5</span></div></div>
<div class="a" style="left:953px;top:2px;width:2px;height:874px;background:#1e1e1e"></div>
<div class="a" style="left:0px;top:0px;width:1913px;height:876px;box-sizing:border-box;border:1px solid #c0c0c0"></div>
<div class="a" style="left:1px;top:1px;width:1911px;height:874px;box-sizing:border-box;border:1px solid #c9c6c3"></div>
</body></html>
